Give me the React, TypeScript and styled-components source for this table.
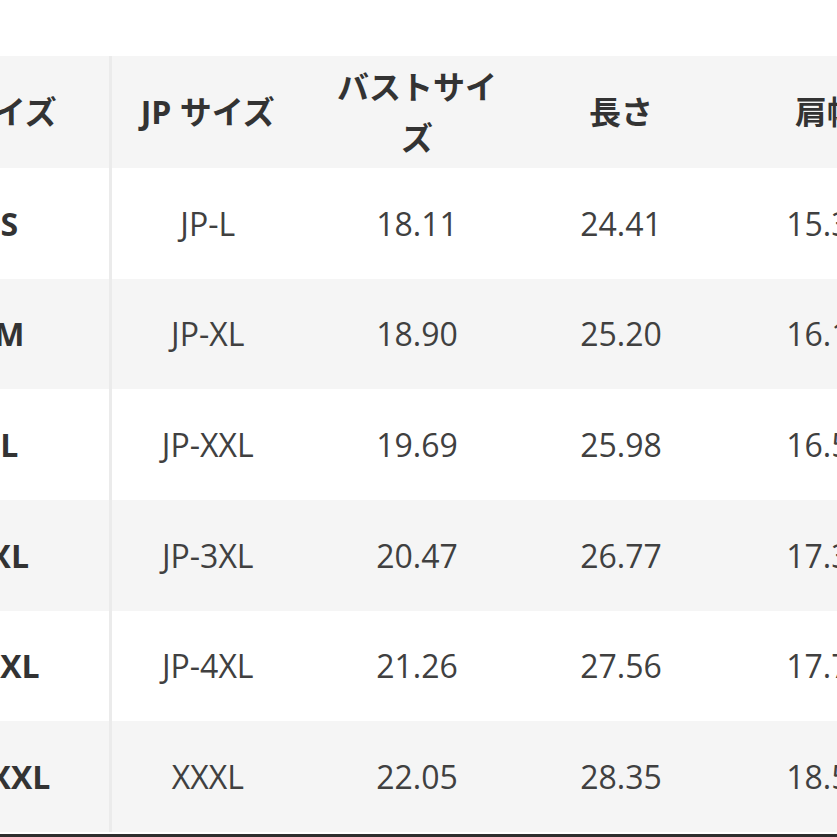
import React, { useLayoutEffect, useRef } from 'react';
import styled, { createGlobalStyle } from 'styled-components';

const GlobalStyle = createGlobalStyle`
  html, body {
    margin: 0;
    padding: 0;
    background: #ffffff;
  }
  body {
    font-family: 'Open Sans', 'Noto Sans CJK JP', sans-serif;
    color: #333333;
  }
`;

const sizes = [
  { us: 'S', jp: 'JP-L', bust: '18.11', length: '24.41', shoulder: '15.35' },
  { us: 'M', jp: 'JP-XL', bust: '18.90', length: '25.20', shoulder: '16.14' },
  { us: 'L', jp: 'JP-XXL', bust: '19.69', length: '25.98', shoulder: '16.54' },
  { us: 'XL', jp: 'JP-3XL', bust: '20.47', length: '26.77', shoulder: '17.32' },
  { us: 'XXL', jp: 'JP-4XL', bust: '21.26', length: '27.56', shoulder: '17.72' },
  { us: 'XXXL', jp: 'XXXL', bust: '22.05', length: '28.35', shoulder: '18.50' },
];

const Page = styled.div`
  padding-top: 56px;
  width: 837px;
  height: 837px;
  box-sizing: border-box;
  overflow: hidden;
`;

const ScrollBox = styled.div`
  width: 837px;
  overflow-x: auto;
  scrollbar-width: none;
  border-bottom: 3px solid #2e2e2e;
  padding-bottom: 2px;
  &::-webkit-scrollbar {
    display: none;
  }
`;

const Table = styled.table`
  border-collapse: collapse;
  table-layout: fixed;
  width: 1032px;
  font-size: 32px;
  line-height: 1.6;
`;

const Row = styled.tr<{ $shade?: boolean }>`
  background: ${(p) => (p.$shade ? '#f5f5f5' : '#ffffff')};
  height: 110.67px;
`;

const HeadRow = styled.tr`
  background: #f5f5f5;
  height: 112px;
`;

const Th = styled.th<{ $first?: boolean }>`
  padding: 0 24px;
  font-weight: 700;
  color: #333333;
  text-align: center;
  vertical-align: middle;
  border-right: ${(p) => (p.$first ? '3px solid #ebebeb' : 'none')};
`;

const Td = styled.td<{ $first?: boolean }>`
  padding: 0 24px;
  text-align: center;
  vertical-align: middle;
  white-space: nowrap;
  color: ${(p) => (p.$first ? '#333333' : '#404040')};
  font-weight: ${(p) => (p.$first ? 700 : 400)};
  border-right: ${(p) => (p.$first ? '3px solid #ebebeb' : 'none')};
`;

export default function App() {
  const box = useRef<HTMLDivElement>(null);

  useLayoutEffect(() => {
    if (box.current) box.current.scrollLeft = 90;
  }, []);

  return (
    <Page>
      <GlobalStyle />
      <ScrollBox ref={box}>
        <Table>
          <colgroup>
            <col style={{ width: 200 }} />
            <col style={{ width: 194 }} />
            <col style={{ width: 226 }} />
            <col style={{ width: 182 }} />
            <col style={{ width: 230 }} />
          </colgroup>
          <thead>
            <HeadRow>
              <Th $first>サイズ</Th>
              <Th>JP サイズ</Th>
              <Th>バストサイズ</Th>
              <Th>長さ</Th>
              <Th>肩幅</Th>
            </HeadRow>
          </thead>
          <tbody>
            {sizes.map((s, i) => (
              <Row key={s.us} $shade={i % 2 === 1}>
                <Td $first>{s.us}</Td>
                <Td>{s.jp}</Td>
                <Td>{s.bust}</Td>
                <Td>{s.length}</Td>
                <Td>{s.shoulder}</Td>
              </Row>
            ))}
          </tbody>
        </Table>
      </ScrollBox>
    </Page>
  );
}
